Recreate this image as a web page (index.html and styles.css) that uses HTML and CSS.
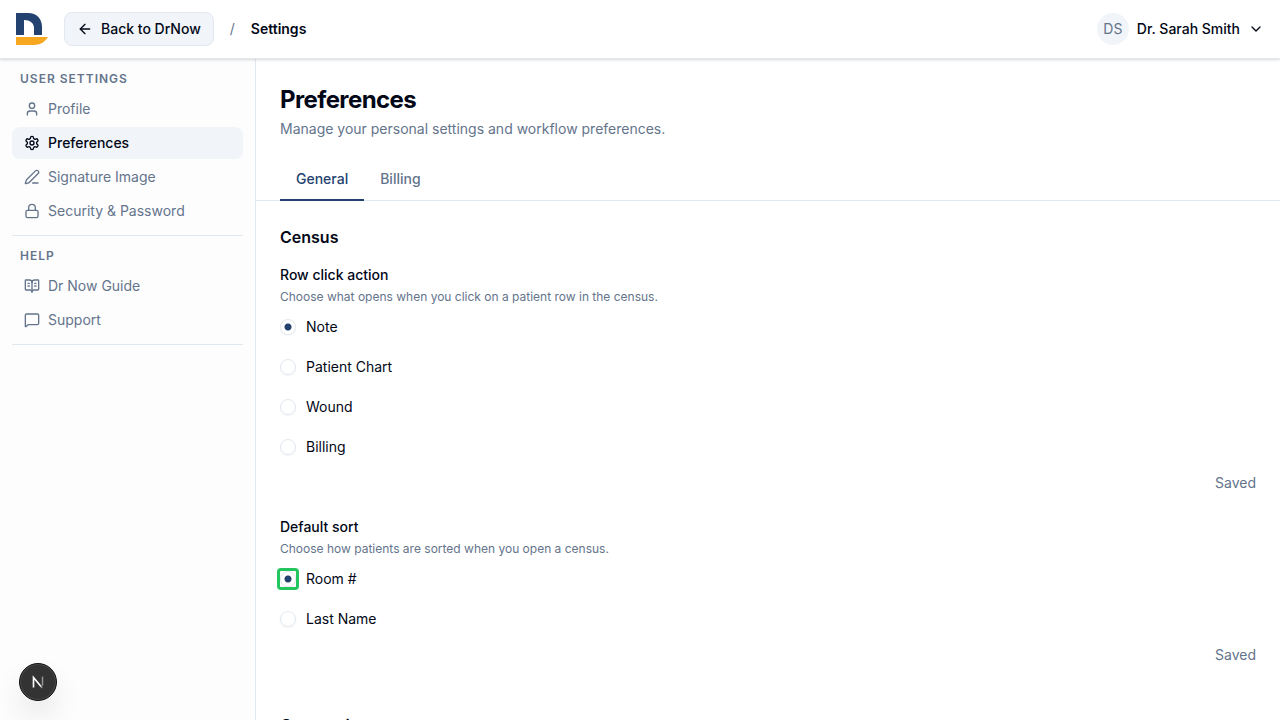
FILE: index.html
```html
<!DOCTYPE html>
<html lang="en">
<head>
    <meta charset="UTF-8">
    <meta name="viewport" content="width=device-width, initial-scale=1.0">
    <title>Settings - DrNow</title>
    <link rel="stylesheet" href="styles.css">
</head>
<body>
    <header class="topbar">
        <svg class="logo" viewBox="0 0 32 32" aria-label="DrNow">
            <path fill="#24426f" d="M0 0h12c9 0 14 6 14 14v8h-8v-7c0-5-4-8-10-8v15H0z"/>
            <path fill="#f7a820" d="M0 24h32c-3 5-8 8-14 8H0z"/>
        </svg>
        <a class="back" href="#">
            <svg class="icon" viewBox="0 0 24 24"><path d="m12 19-7-7 7-7"/><path d="M19 12H5"/></svg>
            Back to DrNow
        </a>
        <span class="slash">/</span>
        <span class="crumb">Settings</span>
        <button class="user" type="button">
            <span class="avatar">DS</span>
            Dr. Sarah Smith
            <svg class="icon" viewBox="0 0 24 24"><path d="m6 9 6 6 6-6"/></svg>
        </button>
    </header>

    <div class="layout">
        <aside class="sidebar">
            <nav class="group">
                <h2 class="group-title">USER SETTINGS</h2>
                <a class="nav-link" href="#">
                    <svg class="icon" viewBox="0 0 24 24"><path d="M19 21v-2a4 4 0 0 0-4-4H9a4 4 0 0 0-4 4v2"/><circle cx="12" cy="7" r="4"/></svg>
                    Profile
                </a>
                <a class="nav-link active" href="#">
                    <svg class="icon" viewBox="0 0 24 24"><path d="M12.22 2h-.44a2 2 0 0 0-2 2v.18a2 2 0 0 1-1 1.73l-.43.25a2 2 0 0 1-2 0l-.15-.08a2 2 0 0 0-2.73.73l-.22.38a2 2 0 0 0 .73 2.73l.15.1a2 2 0 0 1 1 1.72v.51a2 2 0 0 1-1 1.74l-.15.09a2 2 0 0 0-.73 2.73l.22.38a2 2 0 0 0 2.73.73l.15-.08a2 2 0 0 1 2 0l.43.25a2 2 0 0 1 1 1.73V20a2 2 0 0 0 2 2h.44a2 2 0 0 0 2-2v-.18a2 2 0 0 1 1-1.73l.43-.25a2 2 0 0 1 2 0l.15.08a2 2 0 0 0 2.73-.73l.22-.39a2 2 0 0 0-.73-2.73l-.15-.08a2 2 0 0 1-1-1.74v-.5a2 2 0 0 1 1-1.74l.15-.09a2 2 0 0 0 .73-2.73l-.22-.38a2 2 0 0 0-2.73-.73l-.15.08a2 2 0 0 1-2 0l-.43-.25a2 2 0 0 1-1-1.73V4a2 2 0 0 0-2-2z"/><circle cx="12" cy="12" r="3"/></svg>
                    Preferences
                </a>
                <a class="nav-link" href="#">
                    <svg class="icon" viewBox="0 0 24 24"><path d="M13 21h8"/><path d="M21.174 6.812a1 1 0 0 0-3.986-3.987L3.842 16.174a2 2 0 0 0-.5.83l-1.321 4.352a.5.5 0 0 0 .623.622l4.353-1.32a2 2 0 0 0 .83-.497z"/></svg>
                    Signature Image
                </a>
                <a class="nav-link" href="#">
                    <svg class="icon" viewBox="0 0 24 24"><rect width="18" height="11" x="3" y="11" rx="2"/><path d="M7 11V7a5 5 0 0 1 10 0v4"/></svg>
                    Security &amp; Password
                </a>
            </nav>
            <nav class="group">
                <h2 class="group-title">HELP</h2>
                <a class="nav-link" href="#">
                    <svg class="icon" viewBox="0 0 24 24"><path d="M12 7v14"/><path d="M16 12h2"/><path d="M16 8h2"/><path d="M3 18a1 1 0 0 1-1-1V4a1 1 0 0 1 1-1h5a4 4 0 0 1 4 4 4 4 0 0 1 4-4h5a1 1 0 0 1 1 1v13a1 1 0 0 1-1 1h-6a3 3 0 0 0-3 3 3 3 0 0 0-3-3z"/><path d="M6 12h2"/><path d="M6 8h2"/></svg>
                    Dr Now Guide
                </a>
                <a class="nav-link" href="#">
                    <svg class="icon" viewBox="0 0 24 24"><path d="M22 17a2 2 0 0 1-2 2H6.828a2 2 0 0 0-1.414.586l-2.202 2.202A.71.71 0 0 1 2 21.286V5a2 2 0 0 1 2-2h16a2 2 0 0 1 2 2z"/></svg>
                    Support
                </a>
            </nav>
        </aside>

        <main class="content">
            <h1>Preferences</h1>
            <p class="lead">Manage your personal settings and workflow preferences.</p>

            <div class="tabs" role="tablist">
                <button class="tab selected" type="button" role="tab" aria-selected="true">General</button>
                <button class="tab" type="button" role="tab" aria-selected="false">Billing</button>
            </div>

            <section class="panel">
                <h2>Census</h2>
                <fieldset class="setting">
                    <legend>Row click action</legend>
                    <p class="hint">Choose what opens when you click on a patient row in the census.</p>
                    <label class="option"><input type="radio" name="row-click" checked>Note</label>
                    <label class="option"><input type="radio" name="row-click">Patient Chart</label>
                    <label class="option"><input type="radio" name="row-click">Wound</label>
                    <label class="option"><input type="radio" name="row-click">Billing</label>
                    <p class="status">Saved</p>
                </fieldset>
                <fieldset class="setting">
                    <legend>Default sort</legend>
                    <p class="hint">Choose how patients are sorted when you open a census.</p>
                    <label class="option"><input class="highlight" type="radio" name="sort" checked>Room #</label>
                    <label class="option"><input type="radio" name="sort">Last Name</label>
                    <p class="status">Saved</p>
                </fieldset>
            </section>

            <section class="panel">
                <h2>Connections</h2>
            </section>
        </main>
    </div>

    <button class="dev-button" type="button" aria-label="Open dev tools">
        <svg viewBox="0 0 40 40">
            <defs>
                <linearGradient id="fade-diag" x1="20" y1="20" x2="26" y2="27" gradientUnits="userSpaceOnUse">
                    <stop offset="0.5" stop-color="#fff"/>
                    <stop offset="1" stop-color="#fff" stop-opacity="0"/>
                </linearGradient>
                <linearGradient id="fade-stem" x1="0" y1="14" x2="0" y2="24" gradientUnits="userSpaceOnUse">
                    <stop offset="0" stop-color="#fff"/>
                    <stop offset="1" stop-color="#fff" stop-opacity="0"/>
                </linearGradient>
            </defs>
            <path d="M15 26V15l10 12" fill="none" stroke="url(#fade-diag)" stroke-width="1.8"/>
            <path d="M25 14v10" fill="none" stroke="#fff" stroke-opacity="0.5" stroke-width="1.6"/>
        </svg>
    </button>
</body>
</html>
```
FILE: styles.css
```css
* {
    box-sizing: border-box;
}
body {
    display: flex;
    flex-direction: column;
    height: 100vh;
    margin: 0;
    overflow: hidden;
    font-family: Inter, "Liberation Sans", sans-serif;
    font-size: 14px;
    line-height: 20px;
    color: #020817;
    background-color: #fff;
}
h1, h2, p, fieldset, legend {
    margin: 0;
    padding: 0;
}
a {
    color: inherit;
    text-decoration: none;
}
button {
    font: inherit;
    color: inherit;
    border: 0;
    background: none;
    cursor: pointer;
}
.icon {
    width: 16px;
    height: 16px;
    flex-shrink: 0;
    fill: none;
    stroke: currentColor;
    stroke-width: 2;
    stroke-linecap: round;
    stroke-linejoin: round;
}

.topbar {
    display: flex;
    align-items: center;
    gap: 16px;
    padding: 12px 16px;
    border-bottom: 1px solid #e2e8f0;
    box-shadow: 0 1px 3px rgba(0, 0, 0, 0.1), 0 1px 2px rgba(0, 0, 0, 0.06);
    font-weight: 500;
    z-index: 1;
}
.logo {
    width: 32px;
    height: 32px;
}
.back {
    display: flex;
    align-items: center;
    gap: 8px;
    padding: 6px 12px;
    border: 1px solid #e2e8f0;
    border-radius: 8px;
    background-color: #f1f5f9;
}
.slash {
    color: #64748b;
    font-weight: 400;
}
.crumb {
    font-weight: 600;
}
.user {
    display: flex;
    align-items: center;
    gap: 8px;
    margin-left: auto;
    padding: 0;
}
.avatar {
    width: 32px;
    height: 32px;
    border-radius: 50%;
    line-height: 32px;
    text-align: center;
    font-weight: 400;
    color: #64748b;
    background-color: #f1f5f9;
}

.layout {
    display: flex;
    flex: 1;
    min-height: 0;
}
.sidebar {
    width: 256px;
    flex-shrink: 0;
    padding: 8px 12px;
    border-right: 1px solid #e2e8f0;
    background-color: #fdfdfe;
}
.group {
    display: flex;
    flex-direction: column;
    gap: 2px;
    margin-bottom: 8px;
    padding-bottom: 8px;
    border-bottom: 1px solid #e2e8f0;
}
.group-title {
    padding: 4px 8px;
    font-size: 12px;
    line-height: 16px;
    font-weight: 600;
    letter-spacing: 1px;
    color: #64748b;
}
.nav-link {
    display: flex;
    align-items: center;
    gap: 8px;
    padding: 6px 12px;
    border-radius: 8px;
    color: #64748b;
}
.nav-link.active {
    color: #020817;
    font-weight: 500;
    background-color: #f1f5f9;
}

.content {
    flex: 1;
    overflow: hidden;
    padding-top: 24px;
}
.content h1 {
    padding: 0 24px;
    font-size: 24px;
    line-height: 34px;
    font-weight: 700;
    letter-spacing: -0.025em;
}
.lead {
    padding: 2px 24px 0;
    color: #64748b;
}
.tabs {
    display: flex;
    margin-top: 20px;
    padding: 0 24px;
    border-bottom: 1px solid #e2e8f0;
}
.tab {
    margin-bottom: -1px;
    padding: 10px 16px;
    border-bottom: 2px solid transparent;
    font-weight: 500;
    color: #64748b;
}
.tab.selected {
    color: #24426f;
    border-bottom-color: #24426f;
}

.panel {
    padding: 24px 24px 0;
}
.panel + .panel {
    padding-top: 48px;
}
.panel h2 {
    font-size: 16px;
    line-height: 24px;
    font-weight: 600;
}
.setting {
    display: flex;
    flex-direction: column;
    min-width: 0;
    margin-top: 16px;
    border: 0;
}
.setting + .setting {
    margin-top: 24px;
}
.setting legend {
    font-weight: 500;
}
.hint {
    margin-top: 4px;
    font-size: 12px;
    line-height: 16px;
    color: #64748b;
}
.option {
    display: flex;
    align-items: center;
    gap: 10px;
    height: 40px;
}
.hint + .option {
    margin-top: 2px;
}
.option input {
    appearance: none;
    width: 16px;
    height: 16px;
    margin: 0;
    border: 1px solid #e2e8f0;
    border-radius: 50%;
    box-shadow: 0 1px 2px rgba(0, 0, 0, 0.05);
}
.option input:checked {
    background: radial-gradient(circle, #24426f 3px, transparent 4px);
}
.option .highlight {
    position: relative;
}
.option .highlight::after {
    content: "";
    position: absolute;
    inset: -4px;
    border: 3px solid #22c55e;
    border-radius: 4px;
}
.status {
    margin-top: 6px;
    text-align: right;
    color: #64748b;
}

.dev-button {
    position: fixed;
    left: 19px;
    bottom: 19px;
    width: 38px;
    height: 38px;
    padding: 0;
    border: 1px solid #111;
    border-radius: 50%;
    background-color: #333;
    box-shadow: inset 0 0 0 1px #4a4a4a, 0 16px 32px -8px rgba(0, 0, 0, 0.24);
}
.dev-button svg {
    display: block;
    width: 100%;
    height: 100%;
}
```
